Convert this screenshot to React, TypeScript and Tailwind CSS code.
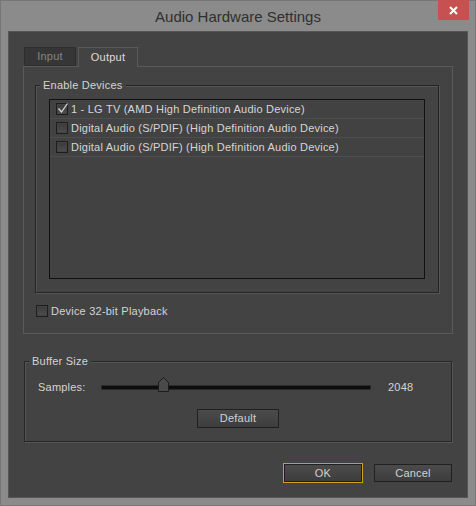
import React from 'react';

const ui = { fontFamily: '"Liberation Sans", Arial, sans-serif' };

function Check({ checked = false }: { checked?: boolean }) {
  return (
    <div className="relative w-[12px] h-[12px] shrink-0 border border-[#1e1e1e] bg-gradient-to-b from-[#3a3a3a] to-[#4e4e4e] shadow-[inset_0_0_0_1px_#444]">
      {checked && (
        <svg className="absolute left-[0px] -top-[2px]" width="12" height="12" viewBox="0 0 12 12">
          <path d="M1.5 6.5 L4.5 10 L10.5 1.5" fill="none" stroke="#d8d8d8" strokeWidth="1.3" />
        </svg>
      )}
    </div>
  );
}

function DeviceRow({ label, checked }: { label: string; checked?: boolean }) {
  return (
    <div className="h-[19px] flex items-center pl-[6px] gap-[3px] border-b border-[#4d4d4d]">
      <Check checked={checked} />
      <span className="text-[11px] text-[#d6d6d6] leading-none">{label}</span>
    </div>
  );
}

function Button({ label, width }: { label: string; width: string }) {
  return (
    <div
      className={`${width} h-[18px] flex items-center justify-center border border-[#202020] bg-gradient-to-b from-[#4b4b4b] to-[#3d3d3d] text-[11px] text-[#d2d2d2]`}
    >
      {label}
    </div>
  );
}

export default function App() {
  return (
    <div className="w-[476px] h-[506px] bg-[#8b8b8b] border border-[#777] flex flex-col tracking-[0.22px]" style={ui}>
      {/* Title bar */}
      <div className="relative h-[30px] flex items-center justify-center">
        <span className="text-[15px] text-[#303030] pt-[2px] tracking-normal">Audio Hardware Settings</span>
        <div className="absolute top-[-1px] right-[6px] w-[31px] h-[20px] bg-[#c75050] flex items-center justify-center">
          <svg width="9" height="9" viewBox="0 0 9 9">
            <path d="M1 1 L8 8 M8 1 L1 8" stroke="#fff" strokeWidth="2" />
          </svg>
        </div>
      </div>

      {/* Client area */}
      <div className="ml-[7px] w-[460px] h-[467px] bg-[#434343] border border-[#565656] pl-[15px] pt-[15px] flex flex-col">
        {/* Tabs */}
        <div className="flex gap-[2px] relative z-10 -mb-px h-[20px]">
          <div className="w-[52px] h-[19px] border border-[#2e2e2e] bg-[#363636] flex items-center justify-center text-[11px] text-[#858585]">
            Input
          </div>
          <div className="w-[60px] h-[20px] border border-b-0 border-[#5a5a5a] bg-[#434343] flex items-center justify-center text-[11px] text-[#dcdcdc]">
            Output
          </div>
        </div>

        {/* Tab panel */}
        <div className="-ml-px w-[430px] h-[268px] border border-[#5a5a5a] flex flex-col">
          <div className="relative ml-[11px] mt-[18px] w-[404px] h-[208px] border border-[#242424] shadow-[1px_1px_0_#565656,inset_1px_1px_0_#565656]">
            <span className="absolute left-[4px] -top-[7px] px-[3px] bg-[#434343] text-[11px] leading-[13px] text-[#d4d4d4]">
              Enable Devices
            </span>
            <div className="ml-[13px] mt-[13px] w-[376px] h-[180px] border border-[#111] bg-[#424242]">
              <DeviceRow label="1 - LG TV (AMD High Definition Audio Device)" checked />
              <DeviceRow label="Digital Audio (S/PDIF) (High Definition Audio Device)" />
              <DeviceRow label="Digital Audio (S/PDIF) (High Definition Audio Device)" />
            </div>
          </div>

          <div className="ml-[12px] mt-[12px] flex items-center gap-[3px] h-[12px]">
            <Check />
            <span className="text-[11px] text-[#d4d4d4] leading-none">Device 32-bit Playback</span>
          </div>
        </div>

        {/* Buffer size */}
        <div className="relative mt-[27px] w-[428px] h-[81px] border border-[#262626] shadow-[1px_1px_0_#565656,inset_1px_1px_0_#565656] flex flex-col">
          <span className="absolute left-[4px] -top-[7px] px-[3px] bg-[#434343] text-[11px] leading-[13px] text-[#d4d4d4]">
            Buffer Size
          </span>
          <div className="mt-[18px] pl-[13px] h-[14px] flex items-center">
            <span className="w-[63px] text-[11px] text-[#d4d4d4]">Samples:</span>
            <div className="relative w-[270px] h-[5px] border border-[#2a2a2a] bg-[#0d0d0d] rounded-[1px]">
              <svg className="absolute left-[56px] -top-[9px]" width="11" height="15" viewBox="0 0 11 15">
                <path d="M0.5 14.5 V5.5 L5.5 0.5 L10.5 5.5 V14.5 Z" fill="#4a4a4a" stroke="#1c1c1c" />
              </svg>
            </div>
            <span className="ml-[17px] text-[11px] text-[#d4d4d4]">2048</span>
          </div>
          <div className="mt-[15px] mx-auto">
            <Button label="Default" width="w-[82px] h-[19px]" />
          </div>
        </div>

        {/* Dialog buttons */}
        <div className="mt-[21px] pr-[15px] flex items-center justify-end gap-[11px]">
          <div className="border border-[#d69c12]">
            <Button label="OK" width="w-[78px]" />
          </div>
          <Button label="Cancel" width="w-[78px]" />
        </div>
      </div>
    </div>
  );
}
